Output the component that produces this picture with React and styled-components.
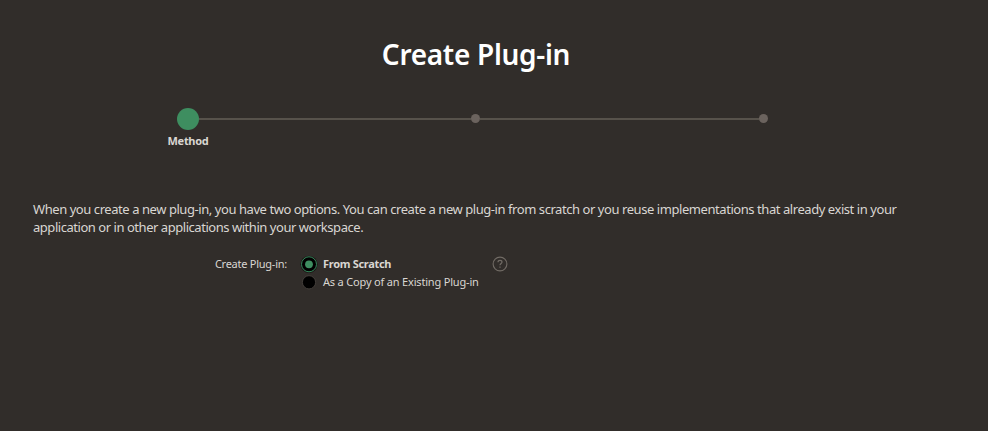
import React from "react";
import styled, { createGlobalStyle } from "styled-components";

const GlobalStyle = createGlobalStyle`
  * { box-sizing: border-box; }
  body {
    margin: 0;
    background: #312d2a;
    color: #d9d6d2;
    font-family: "Noto Sans", sans-serif;
    overflow: hidden;
  }
`;

const Page = styled.main`
  display: flex;
  flex-direction: column;
  width: 952px;
  height: 431px;
  padding-top: 34px;
`;

const Title = styled.h1`
  margin: 0;
  text-align: center;
  color: #fff;
  font-size: 28px;
  font-weight: 600;
  line-height: 40px;
  letter-spacing: -0.3px;
`;

const Steps = styled.ol`
  display: flex;
  align-items: center;
  width: 591px;
  height: 22px;
  margin: 34px 0 0 177px;
  padding: 0;
  list-style: none;
`;

const Dot = styled.li`
  flex: none;
  width: ${(p) => (p.$current ? 22 : 9)}px;
  height: ${(p) => (p.$current ? 22 : 9)}px;
  margin-bottom: ${(p) => (p.$current ? 0 : 1)}px;
  border-radius: 50%;
  background: ${(p) => (p.$current ? "#3e8e60" : "#6b635e")};
`;

const Track = styled.li`
  flex: ${(p) => p.$width} 1 0;
  height: 2px;
  background: #57524b;
`;

const StepLabel = styled.div`
  width: 82px;
  margin: 3px 0 0 147px;
  text-align: center;
  font-size: 11px;
  font-weight: 700;
  line-height: 16px;
  letter-spacing: -0.3px;
`;

const Intro = styled.p`
  margin: 51px 0 0 33px;
  font-size: 13px;
  line-height: 18px;
  white-space: nowrap;
`;

const IntroLine = styled.span`
  display: block;
  letter-spacing: ${(p) => p.$tracking}px;
`;

const Field = styled.div`
  display: grid;
  grid-template-columns: 254px 191px 16px;
  column-gap: 14px;
  margin: 19px 0 0 33px;
  font-size: 11px;
  line-height: 18px;
`;

const FieldLabel = styled.span`
  text-align: right;
  letter-spacing: -0.25px;
`;

const Options = styled.div`
  display: flex;
  flex-direction: column;
`;

const Option = styled.label`
  display: flex;
  align-items: center;
  gap: 6px;
  height: 18px;
  white-space: nowrap;
  font-weight: ${(p) => (p.$selected ? 700 : 400)};
  letter-spacing: ${(p) => p.$tracking}px;
`;

const RadioIcon = styled.svg`
  flex: none;
  width: 16px;
  height: 18px;
  overflow: visible;
`;

const HelpIcon = styled.svg`
  width: 16px;
  height: 16px;
  margin: 1px 0 0 -14px;
`;

function Radio({ selected }) {
  return (
    <RadioIcon viewBox="0 0 16 18">
      {selected && <circle cx="8" cy="9.3" r="8.6" fill="#1b1815" />}
      <circle
        cx="8"
        cy="9.3"
        r={selected ? 7.5 : 6.6}
        fill="#000"
        stroke={selected ? "#34855a" : "#4b4641"}
        strokeWidth={selected ? 1 : 0.8}
      />
      {selected && <circle cx="8" cy="9.3" r="3.9" fill="#3e8e60" />}
    </RadioIcon>
  );
}

export default function App() {
  return (
    <>
      <GlobalStyle />
      <Page>
        <Title>Create Plug-in</Title>
        <Steps>
          <Dot $current />
          <Track $width={272} />
          <Dot />
          <Track $width={279} />
          <Dot />
        </Steps>
        <StepLabel>Method</StepLabel>
        <Intro>
          <IntroLine $tracking={-0.438}>
            When you create a new plug-in, you have two options. You can create a new plug-in from
            scratch or you reuse implementations that already exist in your
          </IntroLine>
          <IntroLine $tracking={-0.46}>
            application or in other applications within your workspace.
          </IntroLine>
        </Intro>
        <Field>
          <FieldLabel>Create Plug-in:</FieldLabel>
          <Options>
            <Option $selected $tracking={-0.3}>
              <Radio selected />
              From Scratch
            </Option>
            <Option $tracking={-0.18}>
              <Radio />
              As a Copy of an Existing Plug-in
            </Option>
          </Options>
          <HelpIcon viewBox="0 0 16 16" fill="none" stroke="#716b65">
            <circle cx="8" cy="8" r="6.9" strokeWidth="1.1" />
            <path
              d="M6 6.2C6 5 6.9 4.3 8 4.3S10 5 10 6.1C10 7.5 8 7.5 8 9.2M8 10.4v1.3"
              strokeWidth="1.2"
            />
          </HelpIcon>
        </Field>
      </Page>
    </>
  );
}
